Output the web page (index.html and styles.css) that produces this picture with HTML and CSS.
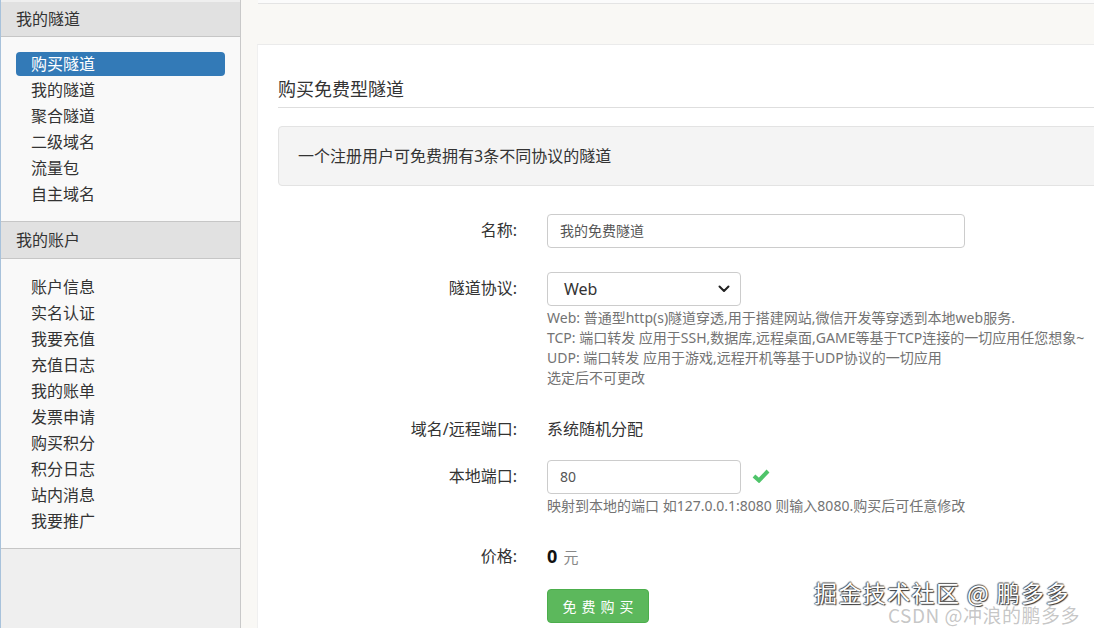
FILE: index.html
```html
<!DOCTYPE html>
<html lang="zh-CN">
<head>
<meta charset="utf-8">
<title>购买免费型隧道</title>
<link rel="stylesheet" href="styles.css">
</head>
<body>
<aside class="sidebar">
  <section class="panel">
    <div class="panel-head">我的隧道</div>
    <ul class="menu">
      <li class="active">购买隧道</li>
      <li>我的隧道</li>
      <li>聚合隧道</li>
      <li>二级域名</li>
      <li>流量包</li>
      <li>自主域名</li>
    </ul>
  </section>
  <section class="panel panel-account">
    <div class="panel-head">我的账户</div>
    <ul class="menu">
      <li>账户信息</li>
      <li>实名认证</li>
      <li>我要充值</li>
      <li>充值日志</li>
      <li>我的账单</li>
      <li>发票申请</li>
      <li>购买积分</li>
      <li>积分日志</li>
      <li>站内消息</li>
      <li>我要推广</li>
    </ul>
  </section>
</aside>
<main class="main">
  <div class="top-panel"></div>
  <div class="card">
    <h2 class="title">购买免费型隧道</h2>
    <div class="well">一个注册用户可免费拥有3条不同协议的隧道</div>
    <div class="form">
      <div class="row row-name">
        <label class="label">名称:</label>
        <div class="field"><div class="input wide">我的免费隧道</div></div>
      </div>
      <div class="row row-proto">
        <label class="label">隧道协议:</label>
        <div class="field">
          <div class="input narrow select"><span class="sel-text">Web</span>
            <svg class="chev" width="12" height="8" viewBox="0 0 12 8"><path d="M1.5 1.5 L6 6 L10.5 1.5" fill="none" stroke="#222" stroke-width="2" stroke-linecap="round" stroke-linejoin="round"/></svg>
          </div>
          <div class="help">
            <div>Web: 普通型http(s)隧道穿透,用于搭建网站,微信开发等穿透到本地web服务.</div>
            <div>TCP: 端口转发 应用于SSH,数据库,远程桌面,GAME等基于TCP连接的一切应用任您想象~</div>
            <div>UDP: 端口转发 应用于游戏,远程开机等基于UDP协议的一切应用</div>
            <div>选定后不可更改</div>
          </div>
        </div>
      </div>
      <div class="row row-domain">
        <label class="label">域名/远程端口:</label>
        <div class="field static">系统随机分配</div>
      </div>
      <div class="row row-port">
        <label class="label">本地端口:</label>
        <div class="field">
          <div class="port-line">
            <div class="input narrow">80</div>
            <svg class="check" width="18" height="15" viewBox="0 0 18 15"><path d="M2 8 L7 12.5 L16 3" fill="none" stroke="#4fc46a" stroke-width="4" stroke-linejoin="miter"/></svg>
          </div>
          <div class="help">映射到本地的端口 如127.0.0.1:8080 则输入8080.购买后可任意修改</div>
        </div>
      </div>
      <div class="row row-price">
        <label class="label">价格:</label>
        <div class="field static"><b class="price">0</b> <span class="unit">元</span></div>
      </div>
      <div class="row row-btn">
        <span class="label"></span>
        <div class="field"><button class="btn">免费购买</button></div>
      </div>
    </div>
  </div>
  <div class="watermark">
    <div class="wm1">掘金技术社区 @ 鹏多多</div>
    <div class="wm2">CSDN @冲浪的鹏多多</div>
  </div>
</main>
</body>
</html>
```

FILE: styles.css
```css
* { box-sizing: border-box; }
html, body { margin: 0; padding: 0; }
body {
  width: 1094px;
  height: 628px;
  overflow: hidden;
  display: flex;
  font-family: "Noto Sans", "Noto Sans CJK SC", sans-serif;
  color: #333;
  background: #f9f8f5;
}
.sidebar {
  width: 241px;
  flex: none;
  background: #efefef;
  border-left: 1px solid #a8c2db;
  border-right: 1px solid #c9c9c9;
  padding-top: 2px;
}
.panel {
  background: #f9f9f9;
  border-bottom: 1px solid #c6c6c6;
}
.panel-head {
  height: 35px;
  line-height: 34px;
  padding-left: 15px;
  font-size: 16px;
  background: #e1e1e1;
  border-bottom: 1px solid #c6c6c6;
}
.panel-account .panel-head {
  height: 37px;
  line-height: 36px;
}
.menu {
  list-style: none;
  margin: 0;
  padding: 15px 0 15px;
}
.panel-account .menu { padding: 16px 0 15px; }
.menu li {
  height: 24px;
  line-height: 24px;
  margin: 0 15px 2px 15px;
  padding-left: 15px;
  font-size: 16px;
  border-radius: 4px;
}
.menu li:last-child { margin-bottom: 0; }
.menu li.active {
  background: #337ab7;
  color: #fff;
}
.main {
  flex: 1;
  position: relative;
  padding-left: 16px;
  overflow: hidden;
}
.top-panel {
  height: 4px;
  margin-left: 1px;
  background: #fbfbfb;
  border-bottom: 1px solid #e4e4e4;
}
.card {
  margin-top: 40px;
  width: 900px;
  height: 640px;
  background: #fff;
  border-top: 1px solid #ebebeb;
  border-left: 1px solid #f0f0f0;
  padding: 31px 0 0 20px;
}
.title {
  margin: 0;
  font-size: 18px;
  font-weight: normal;
  line-height: 26px;
  padding-bottom: 5px;
  border-bottom: 1px solid #dedede;
}
.well {
  margin-top: 18px;
  height: 60px;
  line-height: 58px;
  padding-left: 19px;
  font-size: 16px;
  background: #f4f4f4;
  border: 1px solid #e3e3e3;
  border-radius: 4px;
}
.form { margin-top: 28px; }
.row {
  display: flex;
  align-items: flex-start;
}
.label {
  width: 239px;
  flex: none;
  text-align: right;
  font-size: 16px;
  line-height: 33px;
  margin-right: 30px;
}
.field { font-size: 16px; }
.static { line-height: 33px; }
.input {
  height: 34px;
  border: 1px solid #ccc;
  border-radius: 4px;
  background: #fff;
  padding-left: 12px;
  line-height: 32px;
  font-size: 14px;
  color: #555;
}
.wide { width: 418px; }
.narrow { width: 194px; }
.select {
  display: flex;
  align-items: center;
  justify-content: space-between;
  padding: 0 10px 0 16px;
  font-size: 16px;
  color: #333;
}
.sel-text { line-height: 32px; }
.help {
  color: #737373;
  font-size: 14px;
  line-height: 20px;
  margin-top: 2px;
}
.row-proto { margin-top: 24px; }
.row-domain { margin-top: 25px; }
.row-port { margin-top: 14px; }
.port-line {
  display: flex;
  align-items: center;
  gap: 11px;
}
.check { margin-top: -3px; }
.row-price { margin-top: 24px; }
.price {
  font-size: 18px;
  color: #111;
}
.unit {
  color: #888;
  font-size: 15px;
  margin-left: 2px;
}
.row-btn { margin-top: 15px; }
.btn {
  width: 102px;
  height: 34px;
  background: #5cb85c;
  border: 1px solid #4cae4c;
  border-radius: 4px;
  color: #fff;
  font-family: "Noto Sans CJK SC", sans-serif;
  font-size: 14px;
  letter-spacing: 5px;
  padding: 0 0 0 5px;
}
.watermark {
  position: absolute;
  left: 573px;
  top: 579px;
}
.wm1 {
  font-family: "Noto Sans CJK SC", sans-serif;
  font-size: 23px;
  line-height: 26px;
  color: #fff;
  text-shadow: 1px 1px 1px #333, -1px 0 1px #555, 0 -1px 1px #555;
  letter-spacing: 1.4px;
  white-space: nowrap;
}
.wm2 {
  font-family: "Noto Sans CJK SC", sans-serif;
  font-size: 19px;
  line-height: 20px;
  margin-left: 74px;
  letter-spacing: 0.5px;
  color: rgba(150,150,150,0.55);
  white-space: nowrap;
}
```
